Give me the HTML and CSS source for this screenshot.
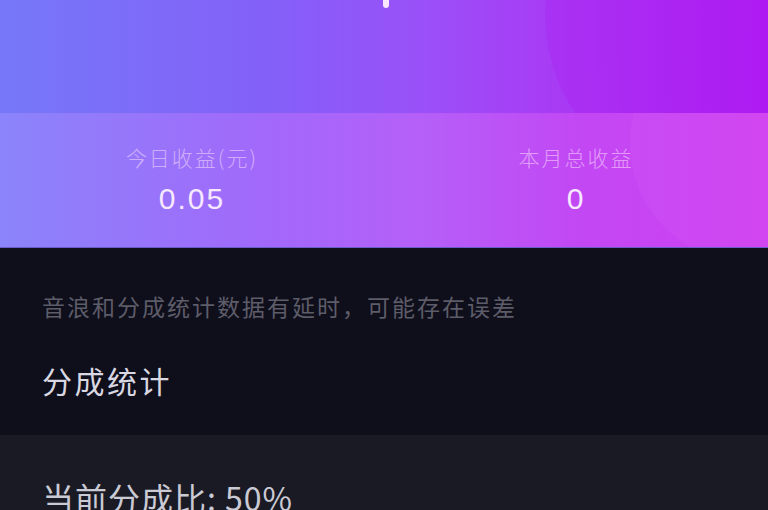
FILE: index.html
```html
<!DOCTYPE html>
<html lang="zh-CN">
<head>
    <meta charset="UTF-8">
    <meta name="viewport" content="width=device-width, initial-scale=1.0">
    <title>收益</title>
    <link rel="stylesheet" href="styles.css">
</head>
<body>
    <!-- Top banner -->
    <div class="header">
        <span class="header-mark"></span>
        <div class="circle circle-top"></div>
    </div>

    <!-- Earnings summary -->
    <div class="stats">
        <div class="circle circle-stats"></div>
        <div class="stat">
            <div class="stat-label">今日收益(元)</div>
            <div class="stat-value">0.05</div>
        </div>
        <div class="stat">
            <div class="stat-label">本月总收益</div>
            <div class="stat-value">0</div>
        </div>
    </div>

    <!-- Notice + section title -->
    <div class="info">
        <p class="notice">音浪和分成统计数据有延时，可能存在误差</p>
        <h2 class="section-title">分成统计</h2>
    </div>

    <!-- Share ratio -->
    <div class="share">
        <p class="share-ratio">当前分成比: 50%</p>
    </div>
</body>
</html>
```

FILE: styles.css
```css
body {
    margin: 0;
    width: 768px;
    height: 510px;
    overflow: hidden;
    background-color: #181823;
    font-family: "Noto Sans CJK SC", "Noto Sans", sans-serif;
}
.header {
    position: relative;
    height: 113px;
    overflow: hidden;
    background: linear-gradient(90deg, #7678f9 0%, #8360f8 35%, #9a50f8 55%, #aa38f4 75%, #b01cf2 100%);
}
.header-mark {
    position: absolute;
    left: 383px;
    top: 0;
    width: 6px;
    height: 8px;
    border-radius: 0 0 3px 3px;
    background-color: #fbe6ff;
}
.circle {
    position: absolute;
    border-radius: 50%;
    pointer-events: none;
}
.circle-top {
    left: 545px;
    top: -160px;
    width: 350px;
    height: 350px;
    background: radial-gradient(circle, rgba(168, 24, 240, 0.3) 0%, rgba(168, 24, 240, 0.25) 88%, rgba(168, 24, 240, 0) 100%);
}
.stats {
    position: relative;
    display: grid;
    grid-template-columns: 1fr 1fr;
    height: 135px;
    overflow: hidden;
    background: linear-gradient(90deg, #8b84fa 0%, #a268fa 35%, #b55ff8 55%, #c248f4 75%, #d040f0 100%);
    border-bottom: 1px solid #6a5cc8;
    box-sizing: border-box;
}
.circle-stats {
    left: 630px;
    top: -90px;
    width: 240px;
    height: 240px;
    background: radial-gradient(circle, rgba(220, 120, 250, 0.1) 0%, rgba(220, 120, 250, 0.1) 88%, rgba(220, 120, 250, 0) 100%);
}
.stat {
    position: relative;
    display: flex;
    flex-direction: column;
    align-items: center;
    padding-top: 31px;
}
.stat-label {
    font-size: 21px;
    line-height: 26px;
    letter-spacing: 2px;
    color: rgba(255, 225, 255, 0.55);
    font-weight: 300;
}
.stat-value {
    margin-top: 12px;
    font-family: "Liberation Sans", Arial, sans-serif;
    font-size: 30px;
    line-height: 34px;
    letter-spacing: 2px;
    color: #f6e8ff;
}
.info {
    height: 187px;
    box-sizing: border-box;
    padding: 42px 42px 0;
    background-color: #0f0e1b;
}
.notice {
    margin: 0;
    font-size: 23px;
    line-height: 32px;
    letter-spacing: 2px;
    color: #5d5c69;
}
.section-title {
    margin: 40px 0 0;
    font-size: 30px;
    line-height: 36px;
    letter-spacing: 2.5px;
    font-weight: 400;
    color: #d9d8e2;
}
.share {
    padding: 42px 42px 0;
    background-color: #1a1a25;
}
.share-ratio {
    margin: 0;
    font-size: 32px;
    line-height: 40px;
    letter-spacing: 1px;
    color: #cacad4;
}
```
